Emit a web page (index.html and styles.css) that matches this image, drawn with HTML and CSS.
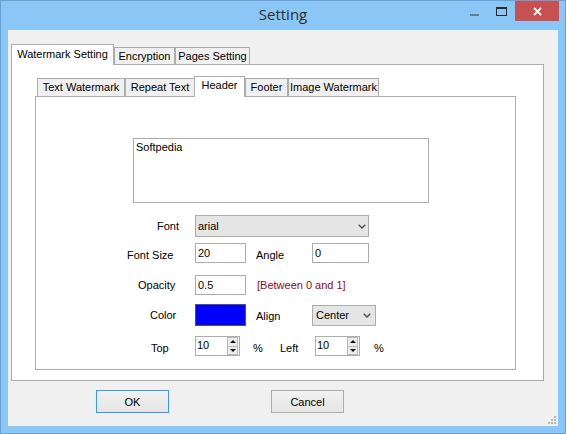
FILE: index.html
```html
<!DOCTYPE html>
<html lang="en">
<head>
<meta charset="utf-8">
<title>Setting</title>
<link rel="stylesheet" href="styles.css">
</head>
<body>
<div class="window">
  <div class="titlebar">
    <div></div>
    <div class="title">Setting</div>
    <div class="controls">
      <span class="ctl-min"></span>
      <span class="ctl-max"></span>
      <span class="ctl-close">
        <svg width="9" height="9" viewBox="0 0 9 9"><path d="M1 1 L8 8 M8 1 L1 8" stroke="#fff" stroke-width="1.8" fill="none"/></svg>
      </span>
    </div>
  </div>

  <div class="client">
    <div class="tabctl outer">
      <div class="strip">
        <div class="tab active w-wm">Watermark Setting</div>
        <div class="tab w-enc">Encryption</div>
        <div class="tab w-pages">Pages Setting</div>
      </div>
      <div class="panel outer-panel">
        <div class="tabctl inner">
          <div class="strip">
            <div class="tab itab w-text">Text Watermark</div>
            <div class="tab itab w-repeat">Repeat Text</div>
            <div class="tab itab active w-header">Header</div>
            <div class="tab itab w-footer">Footer</div>
            <div class="tab itab w-image">Image Watermark</div>
          </div>
          <div class="panel inner-panel">
            <div class="memo">Softpedia</div>

            <div class="row r-font">
              <div class="lc"><span class="lab p-font">Font</span></div>
              <div class="combo w-fontsel">
                <span>arial</span>
                <svg class="chev" width="8" height="5" viewBox="0 0 8 5"><polyline points="0.7,0.7 4,4 7.3,0.7" fill="none" stroke="#555" stroke-width="1.5"/></svg>
              </div>
            </div>

            <div class="row r-size">
              <div class="lc"><span class="lab p-size low">Font Size</span></div>
              <div class="field w-51">20</div>
              <div class="lab2 low2">Angle</div>
              <div class="field w-57">0</div>
            </div>

            <div class="row r-opacity">
              <div class="lc"><span class="lab p-opacity">Opacity</span></div>
              <div class="field w-51">0.5</div>
              <div class="hint">[Between 0 and 1]</div>
            </div>

            <div class="row r-color">
              <div class="lc"><span class="lab p-color">Color</span></div>
              <div class="swatch"></div>
              <div class="lab2 low1">Align</div>
              <div class="combo w-align">
                <span>Center</span>
                <svg class="chev" width="8" height="5" viewBox="0 0 8 5"><polyline points="0.7,0.7 4,4 7.3,0.7" fill="none" stroke="#555" stroke-width="1.5"/></svg>
              </div>
            </div>

            <div class="row r-top">
              <div class="lc"><span class="lab p-top low">Top</span></div>
              <div class="num">
                <span class="numval">10</span>
                <span class="spin"><span class="sb"><i class="tri-up"></i></span><span class="sb"><i class="tri-down"></i></span></span>
              </div>
              <span class="pct low">%</span>
              <span class="lab-left low">Left</span>
              <div class="num">
                <span class="numval">10</span>
                <span class="spin"><span class="sb"><i class="tri-up"></i></span><span class="sb"><i class="tri-down"></i></span></span>
              </div>
              <span class="pct2 low">%</span>
            </div>
          </div>
        </div>
      </div>
    </div>

    <div class="actions">
      <button class="btn default">OK</button>
      <button class="btn">Cancel</button>
    </div>

    <span class="grip"></span>
  </div>
</div>
</body>
</html>
```

FILE: styles.css
```css
* { box-sizing: border-box; }
html, body { margin: 0; padding: 0; }
body {
  width: 566px;
  height: 434px;
  overflow: hidden;
  font-family: "Liberation Sans", Arial, sans-serif;
  font-size: 11px;
  color: #000;
}

.window {
  width: 566px;
  height: 434px;
  border: 1px solid #6a9fd6;
  background: #8ac6f6;
  display: flex;
  flex-direction: column;
}

.titlebar {
  height: 29px;
  display: grid;
  grid-template-columns: 1fr auto 1fr;
  padding: 0 6px;
}
.title {
  font-family: "Open Sans", "Noto Sans", sans-serif;
  font-size: 15px;
  color: #2e2e2e;
  line-height: 27px;
  white-space: nowrap;
}
.controls {
  justify-self: end;
  display: flex;
  align-items: flex-start;
}
.ctl-min {
  width: 9px;
  height: 2px;
  background: #5f7c99;
  margin-top: 13px;
}
.ctl-max {
  width: 11px;
  height: 9px;
  border: 1px solid #2b2b2b;
  border-top-width: 2px;
  margin: 6px 0 0 17px;
}
.ctl-close {
  width: 44px;
  height: 20px;
  background: #c75050;
  margin-left: 8px;
  display: flex;
  align-items: center;
  justify-content: center;
}

.client {
  position: relative;
  margin: 0 7px;
  height: 396px;
  background: #f0f0f0;
  padding: 14px 0 0 3px;
}

/* tabs */
.strip {
  display: flex;
  align-items: flex-end;
  height: 20px;
}
.tab {
  border: 1px solid #acacac;
  border-bottom: none;
  background: #f0f0f0;
  height: 17px;
  padding-top: 2px;
  line-height: 13px;
  text-align: center;
  white-space: nowrap;
}
.tab.active {
  background: #fff;
  height: 21px;
  margin-bottom: -1px;
  padding-top: 3px;
  position: relative;
  z-index: 1;
}
.itab { height: 18px; padding-top: 2px; }
.itab.active { height: 21px; padding-top: 2px; }

.w-wm { width: 103px; }
.w-enc { width: 61px; }
.w-pages { width: 75px; }
.w-text { width: 88px; margin-left: 2px; }
.w-repeat { width: 70px; }
.w-header { width: 51px; margin-left: -1px; }
.w-footer { width: 43px; }
.w-image { width: 91px; }

.panel {
  border: 1px solid #acacac;
  background: #fff;
}
.outer-panel {
  width: 533px;
  height: 317px;
  padding: 11px 0 0 23px;
}
.inner-panel {
  width: 481px;
  height: 274px;
}

/* form */
.memo {
  margin: 41px 0 0 97px;
  width: 296px;
  height: 65px;
  border: 1px solid #acacac;
  padding: 2px 2px;
  line-height: 13px;
}

.row {
  display: flex;
  align-items: center;
  white-space: nowrap;
}
.r-font { margin-top: 12px; height: 22px; }
.r-size { margin-top: 6px; height: 20px; }
.r-opacity { margin-top: 12px; height: 20px; }
.r-color { margin-top: 9px; height: 22px; }
.r-top { margin-top: 10px; height: 20px; }

.lc { width: 159px; flex: none; }
.lab { display: block; }
.p-font { padding-left: 121px; }
.p-size { padding-left: 91px; }
.p-opacity { padding-left: 102px; }
.p-color { padding-left: 114px; }
.p-top { padding-left: 115px; }
.low { padding-top: 3px; }
.low1 { padding-top: 2px; }
.low2 { padding-top: 4px; }

.field {
  height: 20px;
  border: 1px solid #acacac;
  background: #fff;
  padding-left: 2px;
  display: flex;
  align-items: center;
  flex: none;
}
.w-51 { width: 51px; }
.w-57 { width: 57px; }

.lab2 {
  width: 56px;
  margin-left: 10px;
  flex: none;
}
.hint {
  margin-left: 11px;
  color: #8b0a1a;
}

.combo {
  height: 22px;
  border: 1px solid #acacac;
  background: #e5e5e5;
  display: flex;
  align-items: center;
  justify-content: space-between;
  padding: 0 2px 0 2px;
  flex: none;
}
.w-fontsel { width: 174px; }
.w-align { width: 64px; height: 21px; padding: 0 4px 0 3px; }
.chev { display: block; margin-top: 1px; }

.swatch {
  width: 51px;
  height: 22px;
  background: #0000ff;
  border: 1px solid #555;
  flex: none;
}

.num {
  width: 45px;
  height: 20px;
  border: 1px solid #acacac;
  background: #fff;
  display: flex;
  align-items: stretch;
  flex: none;
}
.numval {
  padding-left: 1px;
  line-height: 16px;
  flex: 1;
}
.spin {
  width: 11px;
  margin: 0 1px 0 0;
  display: flex;
  flex-direction: column;
}
.sb {
  flex: 1;
  border: 1px solid #b9b9b9;
  background: #ececec;
  display: flex;
  align-items: center;
  justify-content: center;
}
.sb + .sb { border-top: none; }
.tri-up {
  width: 0; height: 0;
  border-left: 3px solid transparent;
  border-right: 3px solid transparent;
  border-bottom: 3px solid #111;
}
.tri-down {
  width: 0; height: 0;
  border-left: 3px solid transparent;
  border-right: 3px solid transparent;
  border-top: 3px solid #111;
}
.pct { margin-left: 13px; width: 27px; flex: none; }
.lab-left { width: 35px; flex: none; }
.pct2 { margin-left: 14px; }

/* buttons */
.actions {
  display: flex;
  gap: 102px;
  padding-left: 85px;
  margin-top: 9px;
}
.btn {
  width: 73px;
  height: 23px;
  border: 1px solid #acacac;
  background: linear-gradient(#f2f2f2, #e5e5e5);
  font-family: "Liberation Sans", Arial, sans-serif;
  font-size: 11px;
  color: #000;
  padding: 0;
  margin: 0;
}
.btn.default { border-color: #3399ff; }

.grip {
  position: absolute;
  right: 2px;
  bottom: 2px;
  width: 2px;
  height: 2px;
  background: #b8b8b8;
  box-shadow: -3px 0 #b8b8b8, -6px 0 #b8b8b8, 0 -3px #b8b8b8, -3px -3px #b8b8b8, 0 -6px #b8b8b8;
}
```
